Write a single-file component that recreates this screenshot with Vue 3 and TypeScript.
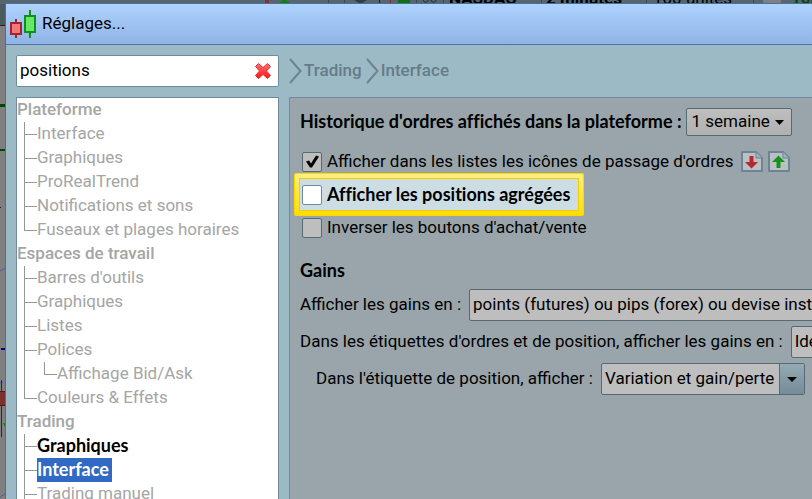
<script setup lang="ts">
import { ref } from 'vue'

interface TreeNode {
  label: string
  match?: boolean
  children?: TreeNode[]
}

const query = ref('positions')
const selected = ref('Trading/Interface')
const history = ref('1 semaine')
const gainsUnit = ref('points (futures) ou pips (forex) ou devise instrument')
const labelUnit = ref('Identique')
const positionLabel = ref('Variation et gain/perte')
const showIcons = ref(true)
const aggregated = ref(false)
const inverted = ref(false)

const groups: TreeNode[] = [
  {
    label: 'Plateforme',
    children: [
      { label: 'Interface' },
      { label: 'Graphiques' },
      { label: 'ProRealTrend' },
      { label: 'Notifications et sons' },
      { label: 'Fuseaux et plages horaires' },
    ],
  },
  {
    label: 'Espaces de travail',
    children: [
      { label: "Barres d'outils" },
      { label: 'Graphiques' },
      { label: 'Listes' },
      { label: 'Polices', children: [{ label: 'Affichage Bid/Ask' }] },
      { label: 'Couleurs & Effets' },
    ],
  },
  {
    label: 'Trading',
    children: [
      { label: 'Graphiques', match: true },
      { label: 'Interface', match: true },
      { label: 'Trading manuel' },
      { label: 'Trading automatique' },
    ],
  },
]
</script>

<template>
  <div class="screen">
    <!-- Chart workspace behind the dialog -->
    <div class="backdrop">
      <svg class="chart" width="6" height="499" viewBox="0 0 6 499">
        <rect width="6" height="25" fill="#4a5a60" />
        <rect y="25" width="6" height="1" fill="#222" />
        <rect y="104" width="6" height="3" fill="#004800" />
        <rect y="149" width="6" height="2" fill="#004800" />
        <rect y="207" width="1" height="1" fill="#3a0060" />
        <path d="M0 271l6-3M0 383l3-1M0 497l5-3" stroke="#4a5c94" fill="none" />
        <rect x="1" y="348" width="5" height="2" fill="#00008c" />
        <rect x="1" y="380" width="1" height="57" fill="#5c1414" />
        <path d="M0 391h6v15H0z" fill="#7c3030" />
        <path d="M0 391.500h6M0 405.500h6" stroke="#5c1414" />
        <path d="M3 423h3v6z" fill="#2c7c00" />
      </svg>
      <div class="toolbar">
        <svg width="180" height="4" viewBox="0 0 180 4">
          <rect width="4" height="3" fill="#8c2c34" />
          <path d="M14 3l4-3h3l4 3z" fill="#108010" />
          <path d="M63.500 0v4M79.500 0v4M151.500 0v4M178.500 0v4" stroke="#3c4a50" />
          <path d="M89 0l5 3h3l5-3z" fill="#333d42" />
          <path d="M114.500 0v4" stroke="#182024" />
          <path d="M125.500 0v4" stroke="#a02028" />
          <rect x="133" width="12" height="3" fill="#107010" />
          <path d="M158 0q2 4 5 1v-1m3 0v1q4 3 5-1" stroke="#282f33" fill="none" />
        </svg>
        <strong class="symbol">NASDAQ</strong>
        <strong class="period">2 minutes</strong>
        <span class="units">100 unites</span>
        <i class="badge"></i>
        <strong class="count">10</strong>
      </div>
    </div>

    <main class="dialog">
      <header class="titlebar">
        <svg width="28" height="30" viewBox="0 0 28 30" aria-hidden="true">
          <path d="M6 10v19" stroke="#a32430" stroke-width="2" />
          <rect x="1" y="14" width="10" height="11" fill="#f47878" stroke="#a32430" stroke-width="2" />
          <path d="M20 1v28" stroke="#109018" stroke-width="2" />
          <rect x="15" y="7" width="10" height="16" fill="#66ea66" stroke="#109018" stroke-width="2" />
        </svg>
        <h1>Réglages...</h1>
      </header>

      <div class="content">
        <aside class="side">
          <div class="search">
            <input v-model="query" type="text" aria-label="Rechercher" />
            <button type="button" aria-label="Effacer" @click="query = ''">
              <svg width="18" height="18" viewBox="0 0 18 18">
                <defs>
                  <linearGradient id="cross" x1="0" y1="0" x2="0" y2="1">
                    <stop offset="0" stop-color="#ff7070" />
                    <stop offset="1" stop-color="#ff1414" />
                  </linearGradient>
                </defs>
                <path
                  d="M4.500 1.500L9 5.500l4.500-4L16.500 4.500 12.500 9l4 4.500-3 3L9 12.500l-4.500 4-3-3L5.500 9l-4-4.500z"
                  fill="url(#cross)"
                  stroke="#e03038"
                  stroke-linejoin="round"
                />
              </svg>
            </button>
          </div>

          <nav class="tree">
            <section v-for="group in groups" :key="group.label">
              <h2>{{ group.label }}</h2>
              <ul>
                <li v-for="node in group.children" :key="node.label">
                  <a
                    href="#"
                    :class="{ match: node.match, active: selected === group.label + '/' + node.label }"
                    @click.prevent="selected = group.label + '/' + node.label"
                  >{{ node.label }}</a>
                  <ul v-if="node.children">
                    <li v-for="child in node.children" :key="child.label">
                      <a href="#" @click.prevent="selected = child.label">{{ child.label }}</a>
                    </li>
                  </ul>
                </li>
              </ul>
            </section>
          </nav>
        </aside>

        <section class="main">
          <nav class="crumbs">
            <template v-for="crumb in ['Trading', 'Interface']" :key="crumb">
              <svg width="13" height="26" viewBox="0 0 13 26" aria-hidden="true">
                <path d="M1 1l10.500 12L1 25" fill="none" stroke="#6c848e" stroke-width="2" />
              </svg>
              <a href="#" @click.prevent>{{ crumb }}</a>
            </template>
          </nav>

          <form class="panel" @submit.prevent>
            <div class="field head">
              <label for="history">Historique d'ordres affichés dans la plateforme :</label>
              <span class="picker compact">
                <select id="history" v-model="history">
                  <option>1 semaine</option>
                </select>
                <svg width="9" height="5" viewBox="0 0 9 5"><path d="M0 0h9L4.500 5z" /></svg>
              </span>
            </div>

            <div class="checks">
              <label class="check">
                <input v-model="showIcons" type="checkbox" />
                <span>Afficher dans les listes les icônes de passage d'ordres</span>
                <svg class="doc" width="22" height="21" viewBox="0 0 22 21" aria-hidden="true">
                  <path d="M1 1h14l6 6v13H1z" fill="#bcc0c3" stroke="#6c8496" stroke-width="2" stroke-linejoin="round" />
                  <path d="M15 1v6h6" fill="#9cb0bc" stroke="#6c8496" />
                  <path d="M8.500 5h4v6H17l-6.500 6.500L4 11h4.500z" fill="#b42a34" />
                </svg>
                <svg class="doc" width="22" height="21" viewBox="0 0 22 21" aria-hidden="true">
                  <path d="M1 1h14l6 6v13H1z" fill="#bcc0c3" stroke="#6c8496" stroke-width="2" stroke-linejoin="round" />
                  <path d="M15 1v6h6" fill="#9cb0bc" stroke="#6c8496" />
                  <path d="M8.500 17h4v-6H17l-6.500-6.500L4 11h4.500z" fill="#14941c" />
                </svg>
              </label>
              <div class="spotlight">
                <label class="check">
                  <input v-model="aggregated" type="checkbox" />
                  <span>Afficher les positions agrégées</span>
                </label>
              </div>
              <label class="check">
                <input v-model="inverted" type="checkbox" />
                <span>Inverser les boutons d'achat/vente</span>
              </label>
            </div>

            <h2>Gains</h2>
            <div class="field">
              <label for="gains">Afficher les gains en :</label>
              <span class="picker">
                <select id="gains" v-model="gainsUnit">
                  <option>points (futures) ou pips (forex) ou devise instrument</option>
                </select>
                <i><svg width="10" height="5" viewBox="0 0 10 5"><path d="M0 0h10L5 5z" /></svg></i>
              </span>
            </div>
            <div class="field">
              <label for="labels">Dans les étiquettes d'ordres et de position, afficher les gains en :</label>
              <span class="picker">
                <select id="labels" v-model="labelUnit">
                  <option>Identique</option>
                </select>
                <i><svg width="10" height="5" viewBox="0 0 10 5"><path d="M0 0h10L5 5z" /></svg></i>
              </span>
            </div>
            <div class="field nested">
              <label for="position">Dans l'étiquette de position, afficher :</label>
              <span class="picker">
                <select id="position" v-model="positionLabel">
                  <option>Variation et gain/perte</option>
                </select>
                <i><svg width="10" height="5" viewBox="0 0 10 5"><path d="M0 0h10L5 5z" /></svg></i>
              </span>
            </div>
          </form>
        </section>
      </div>
    </main>
  </div>
</template>

<style>
body {
  overflow: hidden;
}
</style>

<style scoped>
* {
  box-sizing: border-box;
}
.screen {
  position: relative;
  display: flex;
  height: 100vh;
  padding: 3px 0 0 5px;
  overflow: hidden;
  background: #808080;
  color: #000;
  font: 17px/22px Roboto, 'Noto Sans', sans-serif;
}
.backdrop {
  position: absolute;
  inset: 0;
}
.chart {
  display: block;
}
.toolbar {
  position: absolute;
  top: 0;
  left: 0;
  right: 0;
  display: flex;
  height: 4px;
  padding-left: 265px;
  background: #56666c;
  white-space: nowrap;
  overflow: hidden;
}
.toolbar svg {
  flex: none;
}
.toolbar strong,
.toolbar span {
  flex: none;
  height: 24px;
  margin-top: -13px;
  border-right: 1px solid #3c4a50;
}
.toolbar .symbol {
  width: 97px;
  padding-left: 4px;
}
.toolbar .period {
  width: 105px;
  padding-left: 4px;
}
.toolbar .units {
  width: 107px;
  padding-left: 6px;
}
.badge {
  width: 18px;
  margin: 0 10px 0 9px;
  background: #808080;
}
.toolbar .count {
  color: #004c00;
}
.dialog {
  position: relative;
  display: flex;
  flex: 1;
  flex-direction: column;
  min-width: 0;
  border: solid #4a6ea0;
  border-width: 1px 0 0 1px;
  background: #9bbac6;
}
.titlebar {
  display: flex;
  flex: none;
  align-items: center;
  gap: 4px;
  height: 41px;
  padding-left: 4px;
  border-bottom: 1px solid #4c74ac;
  background: linear-gradient(#afd3ff, #8fb3e4);
}
h1,
h2 {
  margin: 0;
  font-size: inherit;
}
h1 {
  padding-bottom: 2px;
  font-weight: 400;
}
.content {
  display: grid;
  flex: 1;
  grid-template-columns: 263px minmax(0, 1fr);
  gap: 10px;
  min-height: 0;
  padding: 10px 0 0 10px;
}
.side,
.main {
  display: flex;
  flex-direction: column;
  gap: 10px;
  min-width: 0;
  min-height: 0;
}
.search {
  display: flex;
  flex: none;
  align-items: center;
  height: 32px;
  padding: 0 6px 0 3px;
  border: 1px solid #708c9c;
  border-radius: 2px;
  background: #fff;
}
.search input {
  flex: 1;
  min-width: 0;
  padding: 0 0 2px;
  border: 0;
  outline: 0;
  background: none;
  color: inherit;
  font: inherit;
}
.search button {
  display: flex;
  padding: 0;
  border: 0;
  background: none;
}
.tree {
  flex: 1;
  min-height: 0;
  overflow: hidden;
  border: 1px solid #708c9c;
  border-bottom: 0;
  background: #fff;
  color: #a5a5a5;
}
.tree h2 {
  height: 24px;
  font-weight: 500;
}
.tree ul {
  margin: 0;
  padding: 0 0 0 7px;
  list-style: none;
}
.tree li {
  position: relative;
  padding-left: 13px;
}
.tree li::before,
.tree li::after {
  position: absolute;
  top: 0;
  left: 0;
  content: '';
}
.tree li::before {
  bottom: 0;
  border-left: 1px solid #969696;
}
.tree li:last-child::before {
  bottom: auto;
  height: 12px;
}
.tree li::after {
  top: 12px;
  width: 13px;
  border-top: 1px solid #969696;
}
.tree a {
  display: block;
  width: fit-content;
  height: 24px;
  color: inherit;
  text-decoration: none;
}
.tree a.match,
.field.head,
.spotlight .check,
.panel > h2 {
  font: 700 18px/22px Lato, 'Noto Sans', sans-serif;
  font-variant-ligatures: none;
}
.tree a.match {
  color: #000;
}
.tree a.active {
  padding-right: 3px;
  background: #316ac5;
  color: #fff;
}
.crumbs {
  display: flex;
  flex: none;
  align-items: center;
  gap: 2px;
  height: 32px;
}
.crumbs svg:not(:first-child) {
  margin-left: 2px;
}
.crumbs a {
  padding-bottom: 2px;
  color: #667c86;
  font-weight: 500;
  text-decoration: none;
}
.panel {
  flex: 1;
  padding: 10px 0 0 10px;
  overflow: hidden;
  border: solid #708c9c;
  border-width: 1px 0 0 1px;
  background: #99a5aa;
  white-space: nowrap;
}
.field {
  display: flex;
  align-items: center;
  gap: 8px;
  height: 32px;
  margin-bottom: 5px;
}
.field label,
.check span {
  padding-bottom: 2px;
}
.field.head {
  gap: 4px;
  height: 28px;
  margin-bottom: 9px;
}
.field.nested {
  padding-left: 16px;
}
.picker {
  position: relative;
  flex: none;
  height: 32px;
  border: 1px solid #566a74;
  border-radius: 2px;
  background: #bebebe;
  overflow: hidden;
}
.picker select {
  display: block;
  height: 100%;
  padding: 0 29px 2px 3px;
  border: 0;
  outline: 0;
  appearance: none;
  background: none;
  color: #000;
  font: 17px/22px Roboto, 'Noto Sans', sans-serif;
}
.picker i {
  position: absolute;
  top: 0;
  right: 0;
  bottom: 0;
  display: grid;
  place-items: center;
  width: 25px;
  border-left: 1px solid #566a74;
  background: linear-gradient(#94aab4, #748c98);
  pointer-events: none;
}
.picker.compact {
  height: 28px;
  background: linear-gradient(#bebebe, #b0b0b0);
}
.picker.compact select {
  padding: 0 20px 2px 5px;
}
.compact > svg {
  position: absolute;
  top: 11px;
  right: 7px;
  pointer-events: none;
}
.checks {
  display: flex;
  flex-direction: column;
  align-items: flex-start;
  margin-bottom: 15px;
}
.check {
  display: flex;
  align-items: center;
  height: 33px;
  padding-left: 2px;
}
.check input {
  flex: none;
  width: 20px;
  height: 20px;
  margin: 0 5px 0 0;
  border: 1px solid #566a74;
  border-radius: 2px;
  appearance: none;
  background: #bebebe;
}
.check input:checked::before {
  display: block;
  width: 18px;
  height: 18px;
  background: #000;
  clip-path: polygon(3px 9px, 6px 8px, 8px 11px, 13px 3px, 16px 4px, 9px 15px, 7px 15px);
  content: '';
}
.doc {
  margin-left: 5px;
}
.check span + .doc {
  margin-left: 7px;
}
.spotlight {
  margin: -5px -6px;
  padding: 5px;
  border-radius: 3px;
  background: linear-gradient(#fff080, #ffdc00);
  box-shadow: inset 0 0 0 1px #ffd800;
}
.spotlight .check {
  padding: 0 9px 0 3px;
  outline: 1px solid #f4cc00;
  outline-offset: -1px;
  background: #cddde4;
}
.spotlight input {
  border-color: #708c9c;
  background: #fff;
}
.panel > h2 {
  height: 24px;
  margin-bottom: 6px;
}
</style>
